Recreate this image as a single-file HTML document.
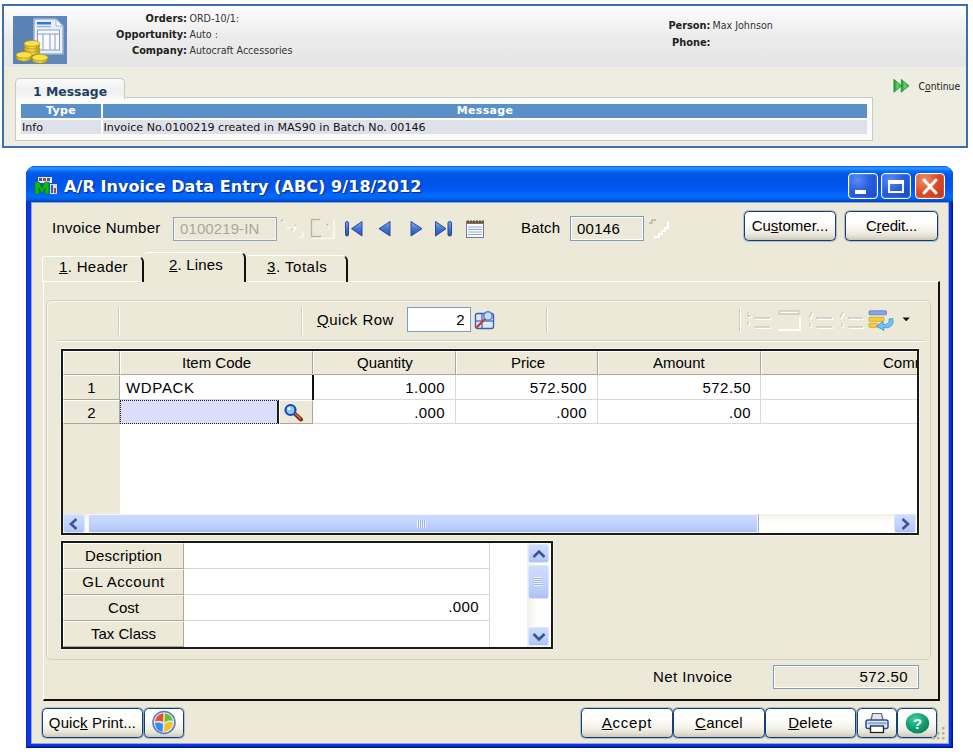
<!DOCTYPE html>
<html>
<head>
<meta charset="utf-8">
<title>A/R Invoice Data Entry</title>
<style>
*{box-sizing:border-box;margin:0;padding:0}
html,body{width:973px;height:755px;overflow:hidden;background:#fff}
body{position:relative;font-family:"Liberation Sans",sans-serif;font-size:15px;color:#000}
.abs{position:absolute}
u{text-decoration:underline;text-underline-offset:1px}

/* ---------- top CRM panel ---------- */
#crm{position:absolute;left:2px;top:4px;width:966px;height:144px;border:2px solid #3e6fae;background:#eeede1}
#crm .grad{position:absolute;left:0;top:0;width:962px;height:61px;background:linear-gradient(to bottom,#fefefe 0%,#f4f4f4 25%,#ebebeb 55%,#e5e5e5 100%)}
#crm .ico{position:absolute;left:9px;top:10px;width:54px;height:48px}
.tv{font-family:"DejaVu Sans","Liberation Sans",sans-serif}
.lbl{position:absolute;font-family:"DejaVu Sans Condensed","DejaVu Sans","Liberation Sans",sans-serif;font-size:10.600px;line-height:14px;color:#333;white-space:nowrap}
.lbl b{color:#222;font-size:10.900px}
#msgtab{position:absolute;left:11px;top:72px;width:110px;height:21px;border:1px solid #c9c9c9;border-bottom:none;border-radius:5px 5px 0 0;background:linear-gradient(#fbfbfb 0%,#f0f0f0 55%,#f3f3f1 80%,#fbfbf8 100%)}
#msgbox{position:absolute;left:11px;top:91px;width:858px;height:43.500px;border:1px solid #c9c9c9;background:#fbfbf8}

/* ---------- XP window ---------- */
#win{position:absolute;left:26px;top:165.500px;width:927px;height:582.500px;border-radius:9px 9px 0 0;background:#0c37dd;overflow:hidden;box-shadow:inset -1.500px -1.500px 0 #001590,inset 1px 0 0 #0a2cc0}
#title{position:absolute;left:0;top:0;width:928px;height:37px;background:linear-gradient(to bottom,#0058ee 0%,#3593ff 5%,#288eff 8%,#127dff 11%,#036ffc 14%,#0262ee 18%,#0057e5 24%,#0054e3 30%,#0055eb 56%,#005bf5 68%,#026afe 78%,#0062ef 88%,#0052d6 94%,#0040ab 97%,#003092 100%)}
#face{position:absolute;left:5.500px;top:37px;width:916px;height:540px;background:#ece9d8;box-shadow:0 0 0 1px rgba(255,255,255,.55)}
#title .t{position:absolute;left:38px;top:11px;font-family:"DejaVu Sans","Liberation Sans",sans-serif;font-weight:bold;font-size:16px;line-height:19px;color:#fff;letter-spacing:.08px;text-shadow:1px 1px 1px #0f2a7a;white-space:nowrap}

/* generic */
.t{position:absolute;white-space:nowrap;font-size:15px;line-height:17px;color:#000}
.fld{position:absolute;border:1px solid #7f9db9;background:#fff}
.btn{position:absolute;border:1px solid #103e7c;border-radius:4.500px;background:linear-gradient(to bottom,#ffffff 0%,#fdfdfb 40%,#f3f1e8 68%,#e6e3d6 84%,#cdc9b9 100%);box-shadow:0 0 0 1px rgba(40,80,140,.28)}
.btn .t{left:0;right:0;text-align:center}
.vsep{position:absolute;width:2px;border-left:1px solid #d2cfbf;border-right:1px solid #fff}
.tab{position:absolute;border-left:1px solid #fff;border-top:1px solid #fff;border-right:2px solid #111;border-radius:3px 6px 0 0}
.cell{position:absolute;background:#ece9d8;border-top:1px solid #fff;border-left:1px solid #fff;border-right:1px solid #aca899;border-bottom:1px solid #aca899}
.hl{position:absolute;height:1px;background:#d9d9d9}
.vl{position:absolute;width:1px;background:#d9d9d9}

.tb{width:30px;height:26px;border:1px solid #fff;border-radius:4px;background:radial-gradient(circle at 30% 25%,#5b8df5 0%,#2a5fe0 45%,#1746c8 100%);box-shadow:inset 0 0 2px rgba(255,255,255,.5)}
.tb.cl{background:radial-gradient(circle at 30% 25%,#f0906e 0%,#dc4a26 50%,#c0321a 100%)}

.sbb{border:1px solid #dce6fe;border-radius:2.500px;background:linear-gradient(to bottom,#cddcfe 0%,#c3d3fc 50%,#b6c9f8 85%,#abbff3 100%)}

.hd{font-weight:bold;font-size:11px;line-height:14px;color:#fff;text-align:center;letter-spacing:.3px;white-space:nowrap}
.rw{font-size:11.100px;line-height:14px;color:#111;white-space:nowrap}
</style>
</head>
<body>

<div id="crm">
  <div class="grad"></div>
  <svg class="ico" viewBox="0 0 54 48">
    <defs>
      <linearGradient id="cg" x1="0" y1="0" x2="1" y2="0"><stop offset="0" stop-color="#c8a81a"/><stop offset=".5" stop-color="#f4e04a"/><stop offset="1" stop-color="#b89410"/></linearGradient>
    </defs>
    <rect width="54" height="48" fill="#5f88ba"/>
    <rect x="0" y="0" width="20" height="48" fill="#5a82b4"/>
    <path d="M21 3h22l7 7v28H21z" fill="#e9eef8" stroke="#9fb2d0" stroke-width="1.500"/>
    <path d="M43 3v7h7z" fill="#fff" stroke="#9fb2d0" stroke-width="1"/>
    <rect x="24" y="6" width="14" height="2.500" fill="#2a7ad8"/>
    <rect x="24" y="10" width="14" height="1.200" fill="#8ab0e8"/>
    <rect x="24.500" y="14" width="22" height="20" fill="#f8fafe" stroke="#8a9cc0" stroke-width="1"/>
    <path d="M24.500 18h22M30 18v16M37 18v16M42 18v16" stroke="#8a9cc0" stroke-width="1" fill="none"/>
    <g stroke="#a8880c" stroke-width=".6">
      <ellipse cx="19" cy="36" rx="8" ry="3" fill="url(#cg)"/>
      <ellipse cx="19" cy="33" rx="8" ry="3" fill="url(#cg)"/>
      <ellipse cx="19" cy="30" rx="8" ry="3" fill="url(#cg)"/>
      <ellipse cx="19" cy="27.500" rx="8" ry="3" fill="#f6e24e"/>
      <ellipse cx="11" cy="42" rx="8" ry="3.200" fill="url(#cg)"/>
      <ellipse cx="11" cy="39" rx="8" ry="3.200" fill="#f6e24e"/>
      <ellipse cx="27" cy="44" rx="8" ry="3.200" fill="url(#cg)"/>
      <ellipse cx="27" cy="41.500" rx="8" ry="3.200" fill="#f6e24e"/>
    </g>
  </svg>
  <div class="lbl" style="left:83px;top:4.5px;width:100px;text-align:right"><b>Orders:</b></div>
  <div class="lbl" style="left:185.5px;top:4.5px">ORD-10/1:</div>
  <div class="lbl" style="left:83px;top:21px;width:100px;text-align:right"><b>Opportunity:</b></div>
  <div class="lbl" style="left:185.5px;top:21px">Auto :</div>
  <div class="lbl" style="left:83px;top:37px;width:100px;text-align:right"><b>Company:</b></div>
  <div class="lbl" style="left:185.5px;top:37px">Autocraft Accessories</div>
  <div class="lbl" style="left:606.5px;top:12px;width:100px;text-align:right"><b>Person:</b></div>
  <div class="lbl" style="left:708.5px;top:12px">Max Johnson</div>
  <div class="lbl" style="left:606.5px;top:28.5px;width:100px;text-align:right"><b>Phone:</b></div>

  <div class="abs" style="left:0;top:63px;width:4px;height:36px;background:#e6ebcc;opacity:.8"></div>
  <div id="msgbox"></div>
  <div id="msgtab"></div>
  <div class="abs tv" style="left:29px;top:78px;font-weight:bold;font-size:12.400px;line-height:15px;color:#1d3f63;white-space:nowrap">1 Message</div>
  <div class="abs" style="left:17px;top:98px;width:80px;height:13.500px;background:#5b8fc8"></div>
  <div class="abs" style="left:99px;top:98px;width:764px;height:13.500px;background:#5b8fc8"></div>
  <div class="abs" style="left:17px;top:114px;width:80px;height:14px;background:#dfe1ea"></div>
  <div class="abs" style="left:99px;top:114px;width:764px;height:14px;background:#dfe1ea"></div>
  <div class="abs tv hd" style="left:17px;top:98px;width:80px">Type</div>
  <div class="abs tv hd" style="left:99px;top:98px;width:764px">Message</div>
  <div class="abs tv rw" style="left:18px;top:115px">Info</div>
  <div class="abs tv rw" style="left:99.500px;top:115px">Invoice No.0100219 created in MAS90 in Batch No. 00146</div>

  <svg class="abs" style="left:886.500px;top:72px" width="20.500" height="16.500" viewBox="0 0 22 18">
    <defs><linearGradient id="gg" x1="0" y1="0" x2="1" y2="0"><stop offset="0" stop-color="#1d8a2c"/><stop offset=".45" stop-color="#5fd070"/><stop offset="1" stop-color="#2fae40"/></linearGradient></defs>
    <path d="M3 1.500l8.500 7-8.500 7z" fill="url(#gg)" stroke="#2a9a38" stroke-width="1" stroke-linejoin="round"/>
    <path d="M11 1.500l8.500 7-8.500 7z" fill="url(#gg)" stroke="#2a9a38" stroke-width="1" stroke-linejoin="round"/>
  </svg>
  <div class="lbl" style="left:914.500px;top:72.500px;font-size:10.300px;color:#222">C<u>o</u>ntinue</div>
</div>

<div id="win">
  <div id="title"><div class="t">A/R Invoice Data Entry (ABC) 9/18/2012</div></div>
  <div id="face"></div>
</div>

<!-- title bar icon + buttons -->
<svg class="abs" style="left:34px;top:176px" width="24" height="20" viewBox="0 0 24 20">
  <rect x="4" y="1" width="14" height="6" fill="#e8e8e8"/>
  <rect x="5" y="2" width="3" height="3" fill="#3a55c8"/><rect x="9" y="2" width="3" height="3" fill="#c83a3a"/><rect x="13" y="2" width="3" height="3" fill="#3a55c8"/>
  <path d="M1 18V6h4l3 6 3-6h4v12h-4v-6l-2 4h-2l-2-4v6z" fill="#12b812" stroke="#0a7a0a" stroke-width=".6"/>
  <rect x="16" y="8" width="7" height="10" fill="#d8dce8"/>
  <rect x="17" y="9" width="2" height="8" fill="#3a55c8"/><rect x="20" y="12" width="2" height="5" fill="#c83a3a"/>
</svg>

<div class="abs tb" style="left:847.500px;top:173px"><div class="abs" style="left:6.500px;top:15.500px;width:10.500px;height:4px;background:#fff"></div></div>
<div class="abs tb" style="left:880.500px;top:173px"><div class="abs" style="left:6.500px;top:5.500px;width:16px;height:13px;border:2px solid #fff;border-top-width:4px"></div></div>
<div class="abs tb cl" style="left:914.500px;top:173px">
  <svg width="28" height="25" viewBox="0 0 28 25" style="position:absolute;left:0;top:-.5px"><path d="M8 6l12 13M20 6L8 19" stroke="#fff" stroke-width="3" stroke-linecap="round"/></svg>
</div>

<!-- row 1 -->
<div class="t" style="left:52px;top:219px;letter-spacing:.25px">Invoice Number</div>
<div class="fld" style="left:173px;top:217px;width:104px;height:24px;background:#ece9d8;border-color:#93a3b8;box-shadow:inset 0 0 0 1px rgba(255,255,255,.55)"></div>
<div class="t" style="left:180px;top:219.500px;color:#aaa89a;letter-spacing:.1px">0100219-IN</div>

<div class="t" style="left:521px;top:219px;letter-spacing:.2px">Batch</div>
<div class="fld" style="left:570px;top:216px;width:74px;height:25px;background:#ece9d8;box-shadow:inset 0 0 0 1px #fff"></div>
<div class="t" style="left:577px;top:219.500px;letter-spacing:.28px">00146</div>

<div class="btn" style="left:744px;top:211px;width:92px;height:30px"><div class="t" style="top:5px">Cu<u>s</u>tomer...</div></div>
<div class="btn" style="left:845px;top:211px;width:93px;height:30px"><div class="t" style="top:5px;letter-spacing:-.15px">C<u>r</u>edit...</div></div>

<!-- disabled icons after invoice number -->
<svg class="abs" style="left:279px;top:217px" width="58" height="24" viewBox="0 0 58 24">
  <g fill="none" stroke="#fff" stroke-width="1.600" opacity=".75">
    <path d="M4 4.500h2M8 11h9M14 7l3 4-3 4M20 20h4v-5"/>
    <path d="M33 21.500h22V3"/>
    <path d="M50 9v3"/>
  </g>
  <g fill="none" stroke="#b9b6a6" stroke-width="1.300">
    <path d="M2 3.500h2"/>
    <path d="M41 2.500h-8.500v17h9.500"/>
    <path d="M47.500 7.500h1.500"/>
  </g>
  <path d="M12 13l2-2M15 9l1.500-1.500" stroke="#cfccbc" stroke-width="1.200" fill="none"/>
</svg>
<!-- nav icons -->
<svg class="abs" style="left:344px;top:219px" width="142" height="20" viewBox="0 0 142 20">
  <defs><linearGradient id="nb" x1="0" y1="0" x2="0" y2="1"><stop offset="0" stop-color="#86abf0"/><stop offset=".5" stop-color="#4675d4"/><stop offset="1" stop-color="#2c52aa"/></linearGradient></defs>
  <g fill="url(#nb)" stroke="#2a4a9a" stroke-width="1" stroke-linejoin="round">
    <rect x="1.500" y="2.500" width="3" height="14.500" rx="1.500"/><path d="M18 2.500v14.500L7.500 9.700z"/>
    <path d="M46 2.500v14.500L35 9.700z"/>
    <path d="M67 2.500v14.500l11-7.300z"/>
    <path d="M91.500 2.500v14.500l10.500-7.300z"/><rect x="104" y="2.500" width="3.500" height="14.500" rx="1.500"/>
  </g>
  <g>
    <rect x="122.500" y="3.500" width="17" height="15" fill="#fdfdfd" stroke="#7a7a8a"/>
    <rect x="122" y="2" width="18" height="3" fill="#8a6a5a"/>
    <path d="M124 1v3M127 1v3M130 1v3M133 1v3M136 1v3M139 1v3" stroke="#444" stroke-width="1"/>
    <path d="M124 8h14M124 10.500h14M124 13h14M124 15.500h14" stroke="#8aa8e8" stroke-width="1"/>
  </g>
</svg>
<!-- disabled icon after batch -->
<svg class="abs" style="left:646px;top:217px" width="28" height="24" viewBox="0 0 28 24">
  <path d="M3 6h3v-3h4" fill="none" stroke="#b5b2a2" stroke-width="1.4"/>
  <path d="M8 20h5v-3h3v-3h3v-3h3V5" fill="none" stroke="#fff" stroke-width="1.8"/>
</svg>

<!-- tabs -->
<div class="abs" style="left:43px;top:281px;width:897px;height:420px;border-left:1px solid #fff;border-top:1px solid #fff;border-right:2px solid #111;border-bottom:2px solid #111"></div>
<div class="tab" style="left:42px;top:255.500px;width:102px;height:26px"></div>
<div class="tab" style="left:246px;top:255px;width:102px;height:27px;border-left:none"></div>
<div class="tab" style="left:144px;top:252px;width:102px;height:29.500px;background:#ece9d8;border-left:none"></div><div class="abs" style="left:144px;top:281px;width:99.500px;height:2px;background:#ece9d8"></div>
<div class="t" style="left:59px;top:258px;letter-spacing:.34px"><u>1</u>. Header</div>
<div class="t" style="left:169px;top:256px;letter-spacing:.16px"><u>2</u>. Lines</div>
<div class="t" style="left:267px;top:258px;letter-spacing:.53px"><u>3</u>. Totals</div>

<!-- group box -->
<div class="abs" style="left:46px;top:299.500px;width:885px;height:360px;border:1px solid #d4d1c0;border-radius:5px;box-shadow:inset 1px 1px 0 rgba(255,255,255,.6)"></div>
<div class="abs" style="left:57px;top:340px;width:868px;height:2px;border-top:1px solid #cfccbb;border-bottom:1px solid #fff"></div>
<div class="vsep" style="left:118px;top:307px;height:28px"></div>
<div class="vsep" style="left:301px;top:307px;height:28px"></div>
<div class="vsep" style="left:546px;top:307px;height:26px"></div>
<div class="vsep" style="left:739px;top:307px;height:26px"></div>
<div class="t" style="left:317px;top:311px;letter-spacing:.49px"><u>Q</u>uick Row</div>
<div class="fld" style="left:407px;top:307px;width:64px;height:25px"></div>
<div class="t" style="left:407px;top:311px;width:58px;text-align:right;letter-spacing:.42px">2</div>
<!-- lookup icon -->
<svg class="abs" style="left:474px;top:310px" width="22" height="20" viewBox="0 0 22 20">
  <rect x="1.500" y="3.500" width="18" height="15" rx="2" fill="#dfe9fb" stroke="#3a5fc0" stroke-width="1.4"/>
  <path d="M2 11h17" stroke="#3a5fc0" stroke-width="1.2"/>
  <path d="M8 4v14" stroke="#3a5fc0" stroke-width="1.2"/>
  <circle cx="14" cy="6" r="4.200" fill="#bfe0fb" stroke="#4a7fd8" stroke-width="1.4"/>
  <path d="M10.500 9.500L3 17" stroke="#c8402a" stroke-width="2.400" stroke-linecap="round"/>
</svg>
<!-- disabled toolbar icons -->
<svg class="abs" style="left:745px;top:308px" width="170" height="26" viewBox="0 0 170 26">
  <g fill="none" stroke="#fff" stroke-width="1.800">
    <path d="M4 5v3M4 14v4M10 11h16M10 20h16M3 9h4"/>
    <path d="M35 4h20M33 22h22V9"/>
    <path d="M68 5l-3 6M66 16v4M72 11h16M72 20h16"/>
    <path d="M99 5l-3 6M98 16v4M104 11h15M104 20h15"/>
  </g>
  <g fill="none" stroke="#cdcaba" stroke-width="1.300">
    <path d="M3 4v3M3 13v4M9 10h16M9 19h16M2 8h4"/>
    <path d="M34 3h20v3H34z"/>
    <path d="M67 4l-3 6M65 15v4M71 10h16M71 19h16"/>
    <path d="M98 4l-3 6M97 15v4M103 10h15M103 19h15"/>
  </g>
  <rect x="124" y="2.800" width="17.500" height="4" rx="1" fill="#86a4ec" stroke="#5878cc" stroke-width=".8"/>
  <rect x="124" y="9.300" width="15" height="4" rx=".8" fill="#f9cf3c" stroke="#c9a020" stroke-width=".8"/>
  <rect x="124" y="15.300" width="9" height="4" rx=".8" fill="#f9cf3c" stroke="#c9a020" stroke-width=".8"/>
  <path d="M147.500 10.500c2.500 6-3 10.500-9 9l.5 3-7.500-4.300 6.500-4.700.3 2.800c4 .8 6.500-2 5.700-5.300z" fill="#6cc4f4" stroke="#3a8ed8" stroke-width=".8" stroke-linejoin="round"/>
  <path d="M157.500 9.600h7.400l-3.700 3.700z" fill="#111"/>
</svg>

<!-- main grid -->
<div class="abs" style="left:61px;top:349px;width:858px;height:186px;border:2px solid #1a1a16;background:#fff;box-shadow:0 0 0 1px rgba(255,255,255,.55)"></div>
<div class="abs" style="left:63px;top:351px;width:57px;height:163px;background:#ece9d8"></div>
<div class="cell" style="left:63px;top:351px;width:57px;height:24px"></div>
<div class="cell" style="left:120px;top:351px;width:193px;height:24px"></div>
<div class="cell" style="left:313px;top:351px;width:143px;height:24px"></div>
<div class="cell" style="left:456px;top:351px;width:142px;height:24px"></div>
<div class="cell" style="left:598px;top:351px;width:163px;height:24px"></div>
<div class="cell" style="left:761px;top:351px;width:156px;height:24px;border-right:none"></div>
<div class="cell" style="left:63px;top:375px;width:57px;height:25px"></div>
<div class="cell" style="left:63px;top:400px;width:57px;height:24px"></div>
<div class="hl" style="left:120px;top:399px;width:797px"></div>
<div class="hl" style="left:120px;top:423px;width:797px"></div>
<div class="vl" style="left:455px;top:375px;height:49px"></div>
<div class="vl" style="left:597px;top:375px;height:49px"></div>
<div class="vl" style="left:760px;top:375px;height:49px"></div>
<div class="abs" style="left:312px;top:375px;width:2px;height:25px;background:#111"></div>
<div class="t" style="left:182px;top:354px">Item Code</div>
<div class="t" style="left:357px;top:354px">Quantity</div>
<div class="t" style="left:511px;top:354px">Price</div>
<div class="t" style="left:653px;top:354px">Amount</div>
<div class="abs" style="left:883px;top:354px;width:34px;height:18px;overflow:hidden"><div class="t" style="left:0;top:0">Comment</div></div>
<div class="t" style="left:63px;top:379px;width:57px;text-align:center">1</div>
<div class="t" style="left:63px;top:404px;width:57px;text-align:center">2</div>
<div class="t" style="left:126px;top:379px;letter-spacing:.67px">WDPACK</div>
<div class="t" style="left:345px;top:379px;width:100px;text-align:right;letter-spacing:.42px">1.000</div>
<div class="t" style="left:345px;top:404px;width:100px;text-align:right;letter-spacing:.42px">.000</div>
<div class="t" style="left:487px;top:379px;width:100px;text-align:right;letter-spacing:.42px">572.500</div>
<div class="t" style="left:487px;top:404px;width:100px;text-align:right;letter-spacing:.42px">.000</div>
<div class="t" style="left:651px;top:379px;width:100px;text-align:right;letter-spacing:.42px">572.50</div>
<div class="t" style="left:651px;top:404px;width:100px;text-align:right;letter-spacing:.42px">.00</div>
<!-- selected cell -->
<div class="abs" style="left:120px;top:400px;width:159px;height:24px;background:#dcdcfc;border:1px dotted #222;border-right:2px solid #1c1c1c"></div>
<div class="abs" style="left:279px;top:400px;width:34px;height:24px;background:#ece9d8;border-top:1px solid #fff;border-left:1px solid #fff;border-right:1px solid #aca899;border-bottom:1px solid #aca899"></div>
<svg class="abs" style="left:283px;top:402.500px" width="22" height="19" viewBox="0 0 22 19">
  <path d="M11 10l7 6.500" stroke="#7a2a1a" stroke-width="4" stroke-linecap="round"/>
  <path d="M12 10.500l5.500 5" stroke="#d86a4a" stroke-width="1.600" stroke-linecap="round"/>
  <circle cx="7.500" cy="7" r="5" fill="#8fc8f8" stroke="#1a4ab8" stroke-width="2.200"/>
  <circle cx="6" cy="5.500" r="1.600" fill="#e8f6ff"/>
</svg>
<!-- h scrollbar -->
<div class="abs" style="left:63px;top:514px;width:854px;height:19px;background:linear-gradient(to bottom,#f1efe8,#fefefd 40%,#fff)"></div>
<div class="abs sbb" style="left:63px;top:514px;width:21.500px;height:19px"></div>
<div class="abs sbb" style="left:894px;top:514px;width:22px;height:19px"></div>
<div class="abs" style="left:87.500px;top:514px;width:670.500px;height:19px;border:1px solid #f2f6ff;border-radius:2px;background:linear-gradient(to bottom,#cbdafd 0%,#c3d3fc 50%,#b4c8f8 85%,#a9bdf2 100%);box-shadow:1px 0 0 #98b0e8"></div>
<svg class="abs" style="left:66px;top:517px" width="16" height="14" viewBox="0 0 16 14"><path d="M10.500 2L5 7l5.500 5" fill="none" stroke="#3a5590" stroke-width="2.600"/></svg>
<svg class="abs" style="left:897px;top:517px" width="16" height="14" viewBox="0 0 16 14"><path d="M5.500 2L11 7l-5.500 5" fill="none" stroke="#3a5590" stroke-width="2.600"/></svg>
<div class="abs" style="left:417px;top:520px;width:9px;height:8px;background:repeating-linear-gradient(to right,#eef3ff 0,#eef3ff 1px,#9db4ea 1px,#9db4ea 2px)"></div>

<!-- detail grid -->
<div class="abs" style="left:61px;top:541px;width:492px;height:108px;border:2px solid #1a1a16;background:#fff;box-shadow:0 0 0 1px rgba(255,255,255,.55)"></div>
<div class="cell" style="left:63px;top:543px;width:121px;height:26px"></div>
<div class="cell" style="left:63px;top:569px;width:121px;height:26px"></div>
<div class="cell" style="left:63px;top:595px;width:121px;height:26px"></div>
<div class="cell" style="left:63px;top:621px;width:121px;height:26px"></div>
<div class="hl" style="left:184px;top:568px;width:305px"></div>
<div class="hl" style="left:184px;top:594px;width:305px"></div>
<div class="hl" style="left:184px;top:620px;width:305px"></div>
<div class="vl" style="left:489px;top:543px;height:104px"></div>
<div class="t" style="left:63px;top:547px;width:121px;text-align:center;letter-spacing:.18px">Description</div>
<div class="t" style="left:63px;top:573px;width:121px;text-align:center;letter-spacing:.56px">GL Account</div>
<div class="t" style="left:63px;top:599px;width:121px;text-align:center">Cost</div>
<div class="t" style="left:63px;top:625px;width:121px;text-align:center">Tax Class</div>
<div class="t" style="left:379px;top:598px;width:100px;text-align:right;letter-spacing:.42px">.000</div>
<!-- v scrollbar -->
<div class="abs" style="left:527px;top:543px;width:24px;height:104px;background:linear-gradient(to right,#f1efe8,#fefefd 40%,#fff)"></div>
<div class="abs sbb" style="left:528px;top:544px;width:21px;height:19px"></div>
<div class="abs sbb" style="left:528px;top:627px;width:21px;height:19px"></div>
<div class="abs sbb" style="left:528px;top:565px;width:21px;height:34px"></div>
<svg class="abs" style="left:531px;top:547px" width="16" height="14" viewBox="0 0 16 14"><path d="M2.500 10L8 4.500l5.500 5.500" fill="none" stroke="#3a5590" stroke-width="2.600"/></svg>
<svg class="abs" style="left:531px;top:630px" width="16" height="14" viewBox="0 0 16 14"><path d="M2.500 4L8 9.500 13.500 4" fill="none" stroke="#3a5590" stroke-width="2.600"/></svg>
<div class="abs" style="left:534px;top:577px;width:9px;height:9px;background:repeating-linear-gradient(to bottom,#eef3ff 0,#eef3ff 1px,#9db4ea 1px,#9db4ea 2px)"></div>

<!-- net invoice -->
<div class="t" style="left:653px;top:668px;letter-spacing:.41px">Net Invoice</div>
<div class="fld" style="left:773px;top:665px;width:146px;height:24px;background:#ece9d8;box-shadow:inset 0 0 0 1px #fff"></div>
<div class="t" style="left:800px;top:668px;width:108px;text-align:right;letter-spacing:.42px">572.50</div>

<!-- bottom buttons -->
<div class="btn" style="left:42px;top:708px;width:101px;height:30px"><div class="t" style="top:5px;letter-spacing:.1px">Quic<u>k</u> Print...</div></div>
<div class="btn" style="left:144px;top:708px;width:40px;height:30px"></div>
<div class="btn" style="left:581px;top:708px;width:92px;height:30px"><div class="t" style="top:5px;letter-spacing:.75px"><u>A</u>ccept</div></div>
<div class="btn" style="left:673px;top:708px;width:92px;height:30px"><div class="t" style="top:5px;letter-spacing:.18px"><u>C</u>ancel</div></div>
<div class="btn" style="left:765px;top:708px;width:91px;height:30px"><div class="t" style="top:5px;letter-spacing:.22px"><u>D</u>elete</div></div>
<div class="btn" style="left:857px;top:708px;width:40px;height:30px"></div>
<div class="btn" style="left:897px;top:708px;width:40px;height:30px"></div>
<!-- button icons -->
<svg class="abs" style="left:151px;top:710px" width="26" height="25" viewBox="0 0 26 25">
  <circle cx="13" cy="12.500" r="11" fill="#dfe8f8" stroke="#5a7ec8" stroke-width="1.600"/>
  <path d="M12.500 3.500C9 3.500 5 6 4 11.500c3-1 5.500-1 8 .5z" fill="#e8502a"/>
  <path d="M14 3.500c4 .5 7 3 8 7.500-3-1-5.500-.5-8.500 1.500z" fill="#6cc024"/>
  <path d="M4 13c3-1 5.500-.5 8 1l-.5 8C7.500 21.500 4.500 18 4 13z" fill="#3a8ae8"/>
  <path d="M13.500 14c3-2 5.500-2.500 8.500-1.500-.5 5-4 8.500-9 9.500z" fill="#f8c020"/>
</svg>
<svg class="abs" style="left:864px;top:711px" width="26" height="24" viewBox="0 0 26 24">
  <path d="M7 9l1.500-6.500h9L19 9" fill="#e4e4e4" stroke="#666" stroke-width="1.200"/>
  <rect x="2" y="9" width="22" height="8.500" rx="2" fill="#e8edf8" stroke="#2a4a9a" stroke-width="1.500"/>
  <rect x="3.500" y="11" width="19" height="2.500" fill="#8fb0f0"/>
  <rect x="6.500" y="15" width="13" height="6.500" fill="#fff" stroke="#222" stroke-width="1.300"/>
</svg>
<svg class="abs" style="left:905px;top:711px" width="25" height="24" viewBox="0 0 25 24">
  <defs><radialGradient id="hg" cx=".4" cy=".3" r=".8"><stop offset="0" stop-color="#3fd09a"/><stop offset=".6" stop-color="#109a70"/><stop offset="1" stop-color="#0a7a58"/></radialGradient></defs>
  <ellipse cx="12.500" cy="12.300" rx="11.700" ry="10.200" fill="url(#hg)"/>
  <text x="12.500" y="17.500" text-anchor="middle" font-family="Liberation Sans, sans-serif" font-weight="bold" font-size="15" fill="#fff">?</text>
</svg>
<!-- resize grip -->
<svg class="abs" style="left:930px;top:726px" width="18" height="18" viewBox="0 0 18 18">
  <g fill="#b8b4a0"><rect x="12" y="1" width="2.500" height="2.500"/><rect x="12" y="6" width="2.500" height="2.500"/><rect x="12" y="11" width="2.500" height="2.500"/><rect x="7" y="11" width="2.500" height="2.500"/><rect x="2" y="11" width="2.500" height="2.500"/><rect x="7" y="6" width="2.500" height="2.500"/></g>
</svg>

</body>
</html>
